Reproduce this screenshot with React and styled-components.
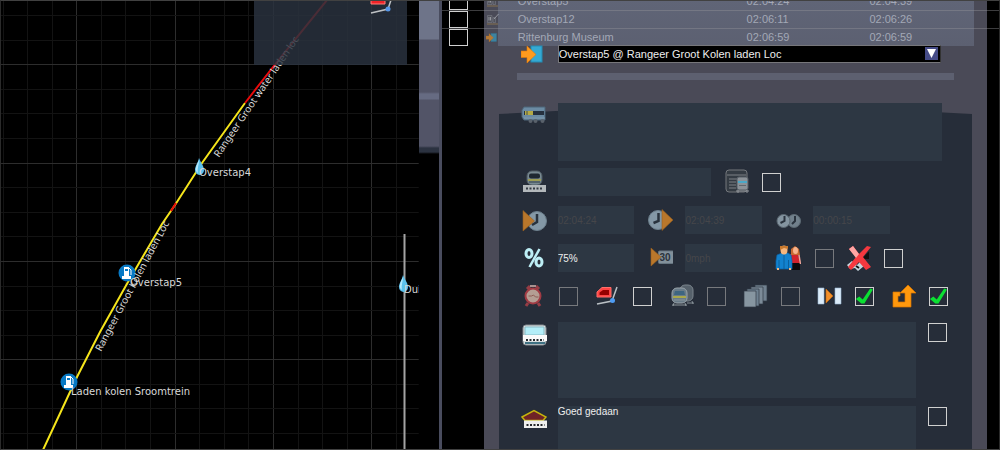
import React from 'react';
import styled, {createGlobalStyle, css} from 'styled-components';

const minorLines = (to, first) => {
  const lines = [];
  for (let i = 0; first + i * 24.58 < to; i++) {
    lines.push({at: Math.round(first + i * 24.58), major: i % 4 === 0});
  }
  return lines;
};

const verticals = minorLines(1600, -22);
const horizontals = minorLines(1200, -34);

const scheduleRows = [
  {id: 'overstap5', name: 'Overstap5', arrival: '02:04:24', departure: '02:04:39', icon: 'Stop'},
  {id: 'overstap12', name: 'Overstap12', arrival: '02:06:11', departure: '02:06:26', icon: 'Stop'},
  {id: 'museum', name: 'Rittenburg Museum', arrival: '02:06:59', departure: '02:06:59', icon: 'Destination'},
];

const icons = {
  Destination: (
    <>
      <rect x="10" y="5" width="11" height="16" fill="#35a9d2" stroke="#238bb4" />
      <path d="M0 10h6V5l9 8.500-9 8.500v-5.500H0z" fill="#ff9b1e" stroke="#e27a08" strokeWidth=".6" />
    </>
  ),
  Stop: (
    <>
      <path d="M3 5h9v14H3zM14 9h5v10h-5z" fill="#55585f" stroke="#a9acb4" />
      <path d="M6 8v7M9 8v7M16 12l9-10" stroke="#c7c9ce" strokeWidth="2" />
      <path d="M2 22h22" stroke="#b08d4c" strokeWidth="2" />
    </>
  ),
  Coach: (
    <>
      <path d="M3 4h21v13H3L1 14V7z" fill="#6b8ba3" stroke="#4d6578" />
      <path d="M3 8h20v4H3z" fill="#26313f" />
      <path d="M4 8h8v4H4z" fill="#b3a945" />
      <path d="M6 8v4" stroke="#44514e" />
      <path d="M3 15h21" stroke="#8199ab" />
      <g fill="#59616b"><circle cx="9.500" cy="18" r="2" /><circle cx="14.500" cy="18" r="2" /><circle cx="21.500" cy="18" r="2" /></g>
    </>
  ),
  Platform: (
    <>
      <rect x="6" y="2" width="15" height="14" rx="5" fill="#788991" stroke="#4e5a63" />
      <rect x="8" y="4.500" width="11" height="5" rx="2" fill="#1f2831" />
      <path d="M7 11h13" stroke="#aaa53f" strokeWidth="1.500" />
      <path d="M8 13h11" stroke="#53626c" strokeWidth="2" />
      <path d="M2 16h23v7H2z" fill="#b3b8bb" />
      <path d="M5 19.500h17" stroke="#343b44" strokeWidth="2" strokeDasharray="2 1.500" />
    </>
  ),
  Timetable: (
    <>
      <rect x="2" y="1" width="21" height="22" rx="3" fill="#343b43" stroke="#74787d" />
      <path d="M3 6h19M5 10h8M5 13h7M5 16h7M5 19h7" stroke="#7d8186" />
      <rect x="13" y="8" width="11" height="13" rx="2" fill="#8c9298" stroke="#555c64" />
      <path d="M14 13h9" stroke="#4aa8c8" strokeWidth="2" />
      <path d="M15 16.500h7" stroke="#62686f" />
      <path d="M14 21v3M23 21v3M12 22h13" stroke="#92969b" />
    </>
  ),
  Arrival: (
    <>
      <circle cx="16" cy="14" r="9.500" fill="#8498a6" stroke="#6c7f8c" />
      <path d="M16 7v8l-5 3" fill="none" stroke="#28323d" strokeWidth="2.500" />
      <path d="M2 3.500L13.500 14 2 24z" fill="#b9772b" stroke="#98601f" strokeWidth=".6" />
    </>
  ),
  Departure: (
    <>
      <circle cx="11" cy="13" r="9.500" fill="#8498a6" stroke="#6c7f8c" />
      <path d="M11.500 6v8l-5 2" fill="none" stroke="#28323d" strokeWidth="2.500" />
      <path d="M15 2.500L26 13 15 23.500z" fill="#b9772b" stroke="#98601f" strokeWidth=".6" />
    </>
  ),
  Duration: (
    <>
      <circle cx="19" cy="14" r="6.500" fill="#71808c" stroke="#5c6973" />
      <path d="M20 9v5l-3 3" fill="none" stroke="#2a333e" strokeWidth="2" />
      <circle cx="8.500" cy="14" r="6.500" fill="#8494a0" stroke="#5c6973" />
      <path d="M9.500 9v5l-4 2" fill="none" stroke="#2a333e" strokeWidth="2" />
    </>
  ),
  Percent: (
    <g fill="none" stroke="#bdeef5" strokeWidth="3">
      <ellipse cx="8" cy="8.500" rx="3" ry="4" />
      <ellipse cx="18" cy="17" rx="3" ry="4" />
      <path d="M18.500 4L8.500 22" strokeWidth="2.500" />
    </g>
  ),
  Speed: (
    <>
      <rect x="11.500" y="6" width="15" height="12.500" rx="1" fill="#82909a" stroke="#667580" />
      <text x="12.500" y="16" fontSize="10" fontWeight="700" fill="#2b333c">30</text>
      <path d="M4 3l10 9-10 9z" fill="#b9772b" stroke="#98601f" strokeWidth=".6" />
    </>
  ),
  Passengers: (
    <>
      <path d="M17 17h8v8h-8z" fill="#0d0a0c" />
      <path d="M15 9h8l2 9h-9z" fill="#d2222d" />
      <path d="M24 10l1.500 9" stroke="#f0a69a" strokeWidth="1.500" />
      <path d="M16 10V4l4-3 4 3 1 6z" fill="#c86a32" />
      <ellipse cx="20.500" cy="5.500" rx="2.500" ry="3.500" fill="#f7b48e" />
      <path d="M2 10l5-2h6l3 2 1 6v8H1v-8z" fill="#1282cf" stroke="#0c66aa" strokeWidth=".7" />
      <path d="M4 15v9M13.500 15v9M9 10v14" stroke="#0b609e" />
      <path d="M2 24h2M14 24h2" stroke="#f5b67e" strokeWidth="2" />
      <ellipse cx="9" cy="5" rx="3.500" ry="4.500" fill="#f5b67e" />
      <path d="M5 5V1h8v3l-4-1z" fill="#c8792d" />
    </>
  ),
  NoCoupling: (
    <>
      <path d="M1 20l5-4 5 4 3-3 4 4-6 5-3-3-5 1z" fill="#c5d5dd" />
      <path d="M18 13l4-4v4zM10 21l3 2" stroke="#111" strokeWidth="2" fill="#111" />
      <path d="M3 4l4-3 6 8 8-8 4 1-8 10 8 10-5 3-7-8-8 8-3-3 8-10z" fill="#f5383f" />
      <path d="M3 4l4-3 6 8-3 4z" fill="#ffa6a5" />
    </>
  ),
  Alarm: (
    <>
      <path d="M6 6l3-3M18 6l-3-3M7 20l-2 3M17 20l2 3" stroke="#963d45" strokeWidth="3" />
      <path d="M9 3h6" stroke="#a89290" strokeWidth="2" />
      <circle cx="12" cy="13" r="7.500" fill="#b49e94" stroke="#a13b44" strokeWidth="2" />
      <path d="M7.500 13h3l2-1 2 2h3" fill="none" stroke="#8e5d55" />
    </>
  ),
  Engine: (
    <>
      <path d="M2 14V9l5-4.500h9V14z" fill="#ff4444" stroke="#ff6f6a" />
      <path d="M4.500 11V9.500L8 7h6v5H4.500z" fill="#950000" />
      <path d="M2 21l15-3 5-14" fill="none" stroke="#bac0c5" strokeWidth="1.500" />
      <circle cx="17.500" cy="17.500" r="2.500" fill="#4e9cf4" />
    </>
  ),
  Trains: (
    <>
      <rect x="11" y="2" width="13" height="16" rx="5" fill="#56616b" stroke="#7a848c" />
      <path d="M23 18l1 3M18 20h7" stroke="#858f96" />
      <rect x="3" y="5" width="15" height="15" rx="5" fill="#697b88" stroke="#9aa4aa" />
      <path d="M6 8h9l1 4H5z" fill="#3e6580" />
      <path d="M4 14h13" stroke="#aaa849" strokeWidth="2" />
      <path d="M5 17h11M5 20l-1 3M16 20l1 3M3 22h15" stroke="#8c969b" />
    </>
  ),
  Cards: (
    <g stroke="#303a45" strokeWidth=".7">
      <path d="M12 2h12v16H12z" fill="#718190" />
      <path d="M8 4h12v17H8z" fill="#7c8b98" />
      <path d="M4 6h12v17H4z" fill="#6f8191" />
      <path d="M1 8h12v16H1z" fill="#8796a1" />
    </g>
  ),
  PassThrough: (
    <>
      <path d="M1 5h6v16H1zM18 5h6v16h-6z" fill="#dcecf9" stroke="#99b7d0" strokeWidth=".6" />
      <path d="M9 6l7 7-7 7z" fill="#f2902b" stroke="#c76b12" strokeWidth=".6" />
    </>
  ),
  Reverse: (
    <path d="M2 9h7v4H7v6h7V10H9l8-8 8 8h-5v14H2z" fill="#ff980d" stroke="#d77400" strokeWidth=".7" />
  ),
  Cab: (
    <>
      <rect x="2" y="3" width="23" height="20" rx="3" fill="#d7dcdd" stroke="#838b91" />
      <path d="M4 5h19v8H4z" fill="#b3eef8" stroke="#87bac5" />
      <path d="M2 13h24v6H2z" fill="#fafafa" />
      <path d="M5 18h18" stroke="#262b30" strokeWidth="2" strokeDasharray="2 1.500" />
      <path d="M4 21h20" stroke="#3f7183" strokeWidth="2" />
    </>
  ),
  Station: (
    <>
      <path d="M1 11L13 4.500 25 11l-3 3.500H4z" fill="#702326" stroke="#c5b40d" strokeWidth="1.500" />
      <path d="M3 14.500h23V22H3z" fill="#efefee" />
      <path d="M5.500 19h18" stroke="#26282b" strokeWidth="2" strokeDasharray="2 1.500" />
    </>
  ),
};

function Icon({name, size = 26}) {
  return <svg width={size} height={size} viewBox="0 0 26 26" aria-hidden="true">{icons[name]}</svg>;
}

function WaterDrop({x, y}) {
  return (
    <g transform={`translate(${x} ${y})`}>
      <path d="M0-9C2-4 5-1 5 3a4.500 5 0 0 1-9 0C-4-1-1-4 0-9z" fill="#5cc0ec" />
      <path d="M0-7C0-2-2 1-1 6-5 4-3-1 0-7z" fill="#b5e7fb" />
    </g>
  );
}

function FuelPump({x, y}) {
  return (
    <g transform={`translate(${x} ${y})`}>
      <circle r="8.500" fill="#0879c4" />
      <path d="M-3-6h5v9h2v3h-9V3h2zM-2-4v2h3v-2z" fill="#fff" fillRule="evenodd" />
      <path d="M2-5l2 2v5" fill="none" stroke="#fff" />
    </g>
  );
}

function TrackMap() {
  return (
    <MapPane>
      <MapDrawing role="img" aria-label="Track map">
        {verticals.map(({at, major}) => <GridLine key={at} x1={at + 0.5} x2={at + 0.5} y1="0" y2="100%" $major={major} />)}
        {horizontals.map(({at, major}) => <GridLine key={at} y1={at + 0.5} y2={at + 0.5} x1="0" x2="100%" $major={major} />)}
        <Track d="M43 450L70 392 77 377 100 332 128 282 162 224 175 205 202 163 245 103" $color="#f5e51b" />
        <Track d="M171 211L176 203M245 103L273 67 327 0" $color="#e80b0b" />
        <Track d="M404.500 234V1200" $color="#a3a3a3" />
        <WaterDrop x={199} y={167} />
        <WaterDrop x={403} y={284} />
        <FuelPump x={127} y={273} />
        <FuelPump x={69} y={382} />
        <TrackLabel transform="translate(219 158) rotate(-56)">Rangeer Groot water laden loc</TrackLabel>
        <TrackLabel transform="translate(101 352) rotate(-62)">Rangeer Groot Kolen laden Loc</TrackLabel>
        <PlaceLabel x="199" y="176">Overstap4</PlaceLabel>
        <PlaceLabel x="130" y="286">Overstap5</PlaceLabel>
        <PlaceLabel x="71" y="395">Laden kolen Sroomtrein</PlaceLabel>
        <PlaceLabel x="404" y="293">Dui</PlaceLabel>
        <rect x="254" y="0" width="153" height="65" fill="#29313c" fillOpacity=".76" />
        <rect x="254" y="0" width="153" height="65" fill="#2f3844" fillOpacity=".3" />
        <path d="M371 0h14v4h-14z" fill="#ef2228" stroke="#ff8079" />
        <path d="M371 13l17-4 3-9" fill="none" stroke="#bec1c4" strokeWidth="1.500" />
        <circle cx="388" cy="9" r="2.500" fill="#5797e8" />
      </MapDrawing>
    </MapPane>
  );
}

function Schedule() {
  return (
    <ScheduleViewport>
      <ScheduleTable>
        <tbody>
          {scheduleRows.map(row => (
            <tr key={row.id}>
              <SelectCell><Tick type="checkbox" aria-label={`Select ${row.name}`} /></SelectCell>
              <IconCell><Icon name={row.icon} size={13} /></IconCell>
              <NameCell>{row.name}</NameCell>
              <TimeCell>{row.arrival}</TimeCell>
              <td>{row.departure}</td>
            </tr>
          ))}
        </tbody>
      </ScheduleTable>
    </ScheduleViewport>
  );
}

function Option({id, icon, label, ...rest}) {
  return (
    <OptionGroup>
      <IconLabel htmlFor={id}><Icon name={icon} /></IconLabel>
      <Tick id={id} type="checkbox" aria-label={label} {...rest} />
    </OptionGroup>
  );
}

function InstructionForm() {
  return (
    <Form onSubmit={event => event.preventDefault()}>
      <ConsistRow>
        <IconLabel htmlFor="consist"><Icon name="Coach" /></IconLabel>
        <TextArea id="consist" aria-label="Consist" disabled />
      </ConsistRow>
      <PlatformRow>
        <IconLabel htmlFor="platform"><Icon name="Platform" /></IconLabel>
        <TextBox id="platform" aria-label="Platform" disabled />
        <IconLabel htmlFor="timetabled"><Icon name="Timetable" /></IconLabel>
        <Tick id="timetabled" type="checkbox" aria-label="Timetabled" />
      </PlatformRow>
      <FieldRow>
        <IconLabel htmlFor="arrival"><Icon name="Arrival" /></IconLabel>
        <TextBox id="arrival" aria-label="Arrival" defaultValue="02:04:24" disabled />
        <IconLabel htmlFor="departure"><Icon name="Departure" /></IconLabel>
        <TextBox id="departure" aria-label="Departure" defaultValue="02:04:39" disabled />
        <IconLabel htmlFor="duration"><Icon name="Duration" /></IconLabel>
        <TextBox id="duration" aria-label="Duration" defaultValue="00:00:15" disabled />
      </FieldRow>
      <FieldRow>
        <IconLabel htmlFor="performance"><Icon name="Percent" /></IconLabel>
        <TextBox id="performance" aria-label="Performance" defaultValue="75%" />
        <IconLabel htmlFor="speed"><Icon name="Speed" /></IconLabel>
        <TextBox id="speed" aria-label="Minimum speed" defaultValue="0mph" disabled />
        <IconLabel htmlFor="passengers"><Icon name="Passengers" /></IconLabel>
        <InlineGroup>
          <Tick id="passengers" type="checkbox" aria-label="Load passengers" disabled />
          <IconLabel htmlFor="no-coupling"><Icon name="NoCoupling" /></IconLabel>
          <Tick id="no-coupling" type="checkbox" aria-label="No coupling" />
        </InlineGroup>
      </FieldRow>
      <OptionsRow>
        <Option id="alarm" icon="Alarm" label="Timed" disabled />
        <Option id="engine" icon="Engine" label="Couple engine" />
        <Option id="trains" icon="Trains" label="Couple train" disabled />
        <Option id="cards" icon="Cards" label="Stack orders" disabled />
        <Option id="pass" icon="PassThrough" label="Pass through" defaultChecked />
        <Option id="reverse" icon="Reverse" label="Reverse" defaultChecked />
      </OptionsRow>
      <MessageRow>
        <IconLabel htmlFor="start-message"><Icon name="Cab" /></IconLabel>
        <TextArea id="start-message" aria-label="Start message" />
        <Tick type="checkbox" aria-label="Show start message" />
      </MessageRow>
      <MessageRow $last>
        <IconLabel htmlFor="end-message"><Icon name="Station" /></IconLabel>
        <TextArea id="end-message" aria-label="Completion message" defaultValue="Goed gedaan" />
        <Tick type="checkbox" aria-label="Show completion message" />
      </MessageRow>
    </Form>
  );
}

export default function App() {
  return (
    <>
      <GlobalStyle />
      <Screen>
        <TrackMap />
        <Divider />
        <Editor>
          <Schedule />
          <DestinationRow>
            <IconLabel htmlFor="destination"><Icon name="Destination" /></IconLabel>
            <SelectWrapper>
              <Select id="destination" aria-label="Destination">
                <option>Overstap5 @ Rangeer Groot Kolen laden Loc</option>
              </Select>
              <SelectArrow viewBox="0 0 13 13" aria-hidden="true">
                <path d="M0 0h13v13H0z" fill="#454b87" />
                <path d="M2 2h9l-4.500 9z" fill="#fff" />
              </SelectArrow>
            </SelectWrapper>
          </DestinationRow>
          <Rule />
          <InstructionForm />
        </Editor>
      </Screen>
    </>
  );
}

const GlobalStyle = createGlobalStyle`
  * {
    box-sizing: border-box;
  }

  body {
    margin: 0;
    background: #000;
    font-family: "Liberation Sans", Arial, sans-serif;
  }
`;

const Screen = styled.main`
  position: relative;
  display: grid;
  grid-template-columns: minmax(0, 3fr) 23px minmax(0, 4fr);
  height: 100vh;
  min-height: 450px;
  overflow: hidden;

  &::after {
    content: '';
    position: absolute;
    inset: 0;
    border: 1px solid #414141;
    border-left-color: #2b2b2b;
    border-right-color: #2b2b2b;
    pointer-events: none;
  }
`;

const MapPane = styled.section`
  min-width: 0;
  overflow: hidden;
`;

const MapDrawing = styled.svg`
  display: block;
  width: 100%;
  height: 100%;
`;

const GridLine = styled.line`
  stroke: ${props => props.$major ? '#2d2d2d' : '#131313'};
`;

const Track = styled.path`
  fill: none;
  stroke: ${props => props.$color};
  stroke-width: 2;
`;

const TrackLabel = styled.text`
  fill: #d8d8d8;
  font-family: "Noto Sans", sans-serif;
  font-size: 10px;
`;

const PlaceLabel = styled(TrackLabel)`
  font-family: "DejaVu Sans", sans-serif;
`;

const Divider = styled.div`
  border-right: 3px solid #494c5e;
  background: linear-gradient(
    #6e7489 39px,
    #525467 40px 92px,
    #666b82 94px 99px,
    #525467 100px 146px,
    #2b3240 148px 152px,
    #000 154px
  );
`;

const Editor = styled.section`
  display: flex;
  flex-direction: column;
  min-width: 0;
  min-height: 0;
  background: linear-gradient(
    to right,
    #000 42px,
    #4a4a57 42px calc(100% - 13px),
    #000 calc(100% - 13px)
  );
`;

const ScheduleViewport = styled.div`
  display: flex;
  flex: none;
  align-items: flex-end;
  height: 46px;
  background: linear-gradient(#606577, #5c6071) 56px 0 / calc(100% - 82px) 100% no-repeat;
`;

const ScheduleTable = styled.table`
  width: 100%;
  table-layout: fixed;
  border-collapse: collapse;
  color: #a3a8b6;
  font-size: 11px;
  line-height: 16px;

  td {
    height: 18px;
    padding: 0;
    border-top: 1px solid rgba(150, 150, 155, 0.4);
  }
`;

const SelectCell = styled.td`
  width: 42px;
  text-align: center;
  line-height: 0;
`;

const IconCell = styled.td`
  width: 34px;
  opacity: 0.6;

  svg {
    display: block;
    margin-left: 2px;
  }
`;

const NameCell = styled.td`
  width: 41%;
`;

const TimeCell = styled.td`
  width: 22%;
`;

const IconLabel = styled.label`
  display: flex;
  flex: none;
  justify-content: center;

  svg {
    display: block;
  }
`;

const DestinationRow = styled.div`
  display: grid;
  grid-template-columns: 48px minmax(0, 1fr);
  grid-template-rows: 16px;
  flex: none;
  align-items: center;
  padding: 0 59px 0 68px;
`;

const SelectWrapper = styled.div`
  position: relative;
  height: 18px;
`;

const Select = styled.select`
  appearance: none;
  display: block;
  width: 100%;
  height: 100%;
  padding: 0 20px 0 0;
  border: 1px solid #77777b;
  border-right-color: #333;
  border-radius: 0;
  background: #000;
  color: #eee;
  font: 11px "Liberation Sans", Arial, sans-serif;
`;

const SelectArrow = styled.svg`
  position: absolute;
  top: 2px;
  right: 3px;
  width: 13px;
  height: 13px;
  pointer-events: none;
`;

const Rule = styled.hr`
  flex: none;
  height: 7px;
  margin: 11px 46px 0 75px;
  border: 0;
  background: #5d6070;
`;

const Form = styled.form`
  position: relative;
  isolation: isolate;
  display: flex;
  flex: 1;
  flex-direction: column;
  min-height: 0;
  margin: 29px 28px 0 57px;
  padding-left: 11px;

  &::before {
    content: '';
    position: absolute;
    z-index: -1;
    inset: 0;
    background: #262d39;
    clip-path: polygon(0 5px, 12% 2px, 50% 0, 88% 2px, 100% 5px, 100% 100%, 0 100%);
  }
`;

const fieldStyle = css`
  display: block;
  min-width: 0;
  width: 100%;
  margin: 0;
  padding: 0;
  border: 0;
  border-radius: 0;
  outline: none;
  background: #2d3743;
  color: #eee;
  font: 10px "Liberation Sans", Arial, sans-serif;

  &:disabled {
    color: #45464a;
  }
`;

const TextBox = styled.input`
  ${fieldStyle}
  height: 28px;
`;

const TextArea = styled.textarea`
  ${fieldStyle}
  height: 100%;
  resize: none;
`;

const Tick = styled.input`
  appearance: none;
  position: relative;
  flex: none;
  width: 19px;
  height: 19px;
  margin: 0;
  border: 1px solid #d0d0d0;

  &:disabled {
    border-color: #77797d;
  }

  &:checked::after {
    content: '';
    position: absolute;
    inset: 0;
    background: #0be032;
    clip-path: polygon(0 67%, 20% 53%, 40% 70%, 84% 6%, 100% 12%, 50% 94%, 32% 94%);
  }

  ${SelectCell} & {
    display: block;
    height: 17px;
    margin-left: 7px;
  }
`;

const ConsistRow = styled.div`
  display: grid;
  grid-template-columns: 48px minmax(0, 1fr);
  flex: none;
  height: 58px;
  margin: -6px 30px 0 0;
`;

const PlatformRow = styled.div`
  display: grid;
  grid-template-columns: 48px 2fr 51px 1fr 133px;
  align-items: center;
  margin-top: 7px;
`;

const FieldRow = styled.div`
  display: grid;
  grid-template-columns: 48px 1fr 51px 1fr 51px 1fr 82px;
  align-items: center;
  height: 28px;
  margin-top: 10px;
`;

const InlineGroup = styled.div`
  display: flex;
  grid-column: span 2;
  align-items: center;
  gap: 12px;
  padding-left: 2px;
`;

const OptionsRow = styled.div`
  display: grid;
  grid-template-columns: repeat(6, 1fr);
  align-items: center;
  height: 26px;
  margin-top: 11px;
  padding: 0 7px 0 11px;
`;

const OptionGroup = styled.div`
  display: flex;
  align-items: center;
  gap: 12px;
`;

const MessageRow = styled.div`
  display: grid;
  grid-template-columns: 48px minmax(0, 1fr) 31px;
  flex: none;
  height: 76px;
  margin-top: 13px;
  padding-right: 25px;

  ${Tick} {
    margin: 1px 0 0 12px;
  }

  ${props => props.$last && css`
    flex: 1;
    height: auto;
    min-height: 43px;
    margin-top: 8px;
  `}
`;
